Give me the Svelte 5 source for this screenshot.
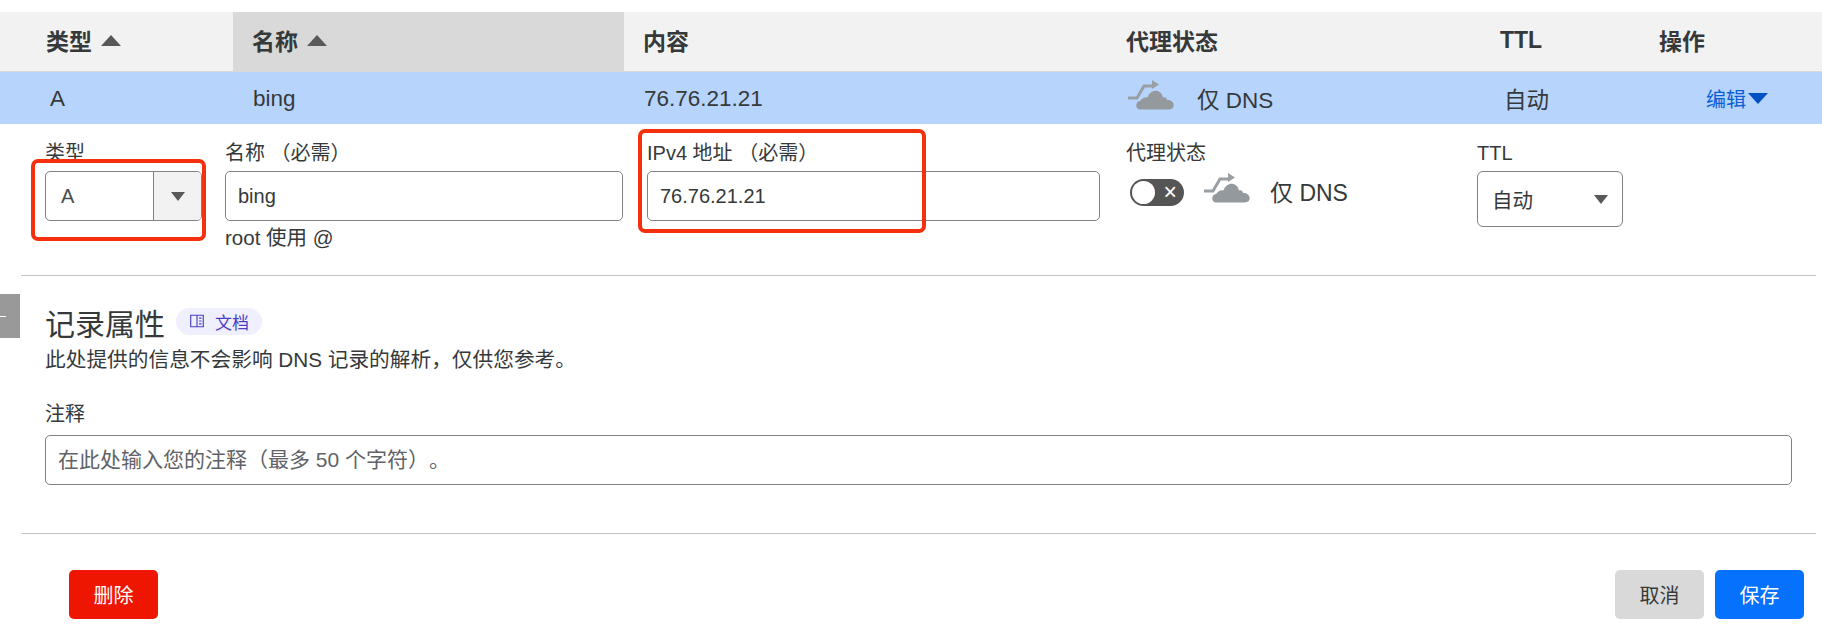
<script>
    const headers = [
        { label: '类型', sort: true },
        { label: '名称', sort: true, active: true },
        { label: '内容' },
        { label: '代理状态' },
        { label: 'TTL' },
        { label: '操作' }
    ];
</script>

{#snippet cloud()}
    <svg class="cloud" viewBox="0 0 46 30" width="46" height="30" aria-hidden="true">
        <path d="M0 18 H9 L16 6 H25" fill="none" stroke="#9a9fa3" stroke-width="3" />
        <path d="M24 0 L31 4.5 L24 9 Z" fill="#9a9fa3" />
        <path d="M12 29.5 C7 29.5 7 21.5 12 21 C14 17.5 18 16.5 19.5 17.5 C22 9 33 8 35 17.5 C37 16.5 39 18 39 20 C47 19.5 48 29.5 41 29.5 Z" fill="#94999d" />
    </svg>
{/snippet}

<div class="page">
    <div class="cols head">
        {#each headers as h}
            <div class="th" class:active={h.active}>
                {h.label}
                {#if h.sort}<span class="sort"></span>{/if}
            </div>
        {/each}
    </div>

    <div class="cols row">
        <div class="td first latin">A</div>
        <div class="td latin">bing</div>
        <div class="td latin">76.76.21.21</div>
        <div class="td proxy">{@render cloud()}<span>仅 DNS</span></div>
        <div class="td ttl">自动</div>
        <div class="td edit">编辑<span class="caret"></span></div>
    </div>

    <div class="form">
        <div class="field type">
            <label for="f-type">类型</label>
            <div class="select-split" id="f-type">
                <span class="val">A</span>
                <span class="btn"><span class="arrow"></span></span>
            </div>
            <div class="mark mark-a"></div>
        </div>
        <div class="field name">
            <label for="f-name">名称 （必需）</label>
            <input id="f-name" value="bing" />
            <div class="help">root 使用 @</div>
        </div>
        <div class="field ip">
            <label for="f-ip">IPv4 地址 （必需）</label>
            <input id="f-ip" value="76.76.21.21" />
            <div class="mark mark-b"></div>
        </div>
        <div class="field status">
            <div class="lbl">代理状态</div>
            <div class="status-row">
                <span class="toggle"><span class="knob"></span><span class="x">×</span></span>
                {@render cloud()}
                <span class="dns">仅 DNS</span>
            </div>
        </div>
        <div class="field ttl-field">
            <div class="lbl">TTL</div>
            <div class="ttl-select"><span>自动</span><span class="arrow"></span></div>
        </div>
    </div>

    <div class="rule first-rule"></div>

    <div class="tab"><span></span></div>

    <section class="attrs">
        <div class="title-line">
            <h2>记录属性</h2>
            <span class="badge">
                <svg viewBox="0 0 14 14" width="16" height="16" aria-hidden="true">
                    <path d="M1.5 2 H12.5 V12 H1.5 Z M7 2 V12 M8.8 4.5 H11 M8.8 7 H11 M8.8 9.5 H11" fill="none" stroke="#4a3fc4" stroke-width="1" />
                </svg>
                文档
            </span>
        </div>
        <p>此处提供的信息不会影响 DNS 记录的解析，仅供您参考。</p>
        <label for="f-note">注释</label>
        <input id="f-note" placeholder="在此处输入您的注释（最多 50 个字符）。" />
    </section>

    <div class="rule"></div>

    <div class="actions">
        <button class="danger">删除</button>
        <div class="right">
            <button class="grey">取消</button>
            <button class="primary">保存</button>
        </div>
    </div>
</div>

<style>
    :global(body) {
        margin: 0;
        background: #fff;
    }

    .page {
        position: relative;
        width: 1822px;
        height: 636px;
        padding-top: 12px;
        box-sizing: border-box;
        overflow: hidden;
        color: #36393a;
        font-family: "Liberation Sans", "Noto Sans CJK SC", sans-serif;
        font-size: 20px;
        text-spacing-trim: space-all;
    }

    .cols {
        display: grid;
        grid-template-columns: 233px 391px 483px 374px 159px 182px;
    }

    .head {
        height: 60px;
        background: #f2f2f2;
        border-bottom: 1px solid #d9d9d9;
        box-sizing: border-box;
    }

    .th {
        display: flex;
        align-items: center;
        gap: 9px;
        padding: 0 0 3px 19px;
        font-size: 23px;
        font-weight: 700;
    }

    .th:first-child {
        padding-left: 46px;
    }

    .th.active {
        background: #d9d9d9;
    }

    .sort {
        width: 0;
        height: 0;
        border-left: 10px solid transparent;
        border-right: 10px solid transparent;
        border-bottom: 11px solid #595959;
    }

    .row {
        height: 52px;
        background: #b7d4fd;
    }

    .td {
        display: flex;
        align-items: center;
        padding-left: 20px;
        font-size: 22.5px;
    }

    .td.latin {
        padding-top: 2px;
    }

    .td.first {
        padding-left: 50px;
    }

    .proxy {
        gap: 23px;
        padding-left: 21px;
    }

    .proxy .cloud {
        margin-top: -7px;
    }

    .ttl {
        padding-left: 23px;
    }

    .td.edit {
        padding-left: 66px;
        color: #0a5fd6;
        font-size: 20px;
    }

    .caret {
        margin-left: 2px;
        border-left: 10px solid transparent;
        border-right: 10px solid transparent;
        border-top: 11px solid #0051c3;
    }

    .form {
        display: flex;
        height: 151px;
        padding: 16px 0 0 45px;
        box-sizing: border-box;
    }

    .field {
        position: relative;
        display: flex;
        flex-direction: column;
    }

    .field label,
    .lbl,
    .attrs label {
        font-size: 20px;
        line-height: 26px;
        margin-bottom: 5px;
    }

    .type { width: 180px; }
    .name { width: 422px; }
    .ip { width: 479px; }
    .status { width: 351px; }

    input {
        box-sizing: border-box;
        height: 50px;
        padding: 0 12px;
        border: 1px solid #808285;
        border-radius: 5px;
        background: #fff;
        color: #36393a;
        font: inherit;
        font-size: 20px;
        outline: none;
    }

    input::placeholder {
        color: #5f6368;
        opacity: 1;
    }

    .name input { width: 398px; }
    .ip input { width: 453px; }

    .help {
        margin-top: 0;
        font-size: 20.5px;
    }

    .select-split {
        display: flex;
        width: 157px;
        height: 50px;
        box-sizing: border-box;
        border: 1px solid #808285;
        border-radius: 5px;
        overflow: hidden;
    }

    .val {
        flex: 1;
        padding-left: 15px;
        line-height: 48px;
        color: #4a4d4f;
    }

    .btn {
        display: flex;
        width: 47px;
        align-items: center;
        justify-content: center;
        background: #f2f2f2;
        border-left: 1px solid #808285;
    }

    .arrow {
        width: 0;
        height: 0;
        border-left: 7px solid transparent;
        border-right: 7px solid transparent;
        border-top: 9px solid #595959;
    }

    .mark {
        position: absolute;
        box-sizing: border-box;
        border: 4px solid #f5300f;
        border-radius: 7px;
    }

    .mark-a {
        left: -14px;
        top: 19px;
        width: 175px;
        height: 82px;
    }

    .mark-b {
        left: -9px;
        top: -11px;
        width: 288px;
        height: 104px;
    }

    .status-row {
        display: flex;
        align-items: center;
        gap: 20px;
    }

    .status-row .cloud {
        margin: -4px 0 0 0;
    }

    .toggle {
        display: flex;
        align-items: center;
        justify-content: space-between;
        width: 54px;
        height: 27px;
        margin: 6px 0 0 4px;
        padding: 0 7px 0 2px;
        box-sizing: border-box;
        border-radius: 14px;
        background: #555;
    }

    .knob {
        width: 23px;
        height: 23px;
        border-radius: 50%;
        background: #fff;
    }

    .x {
        color: #fff;
        font-size: 23px;
        line-height: 1;
    }

    .dns {
        margin-top: 3px;
        font-size: 23px;
    }

    .ttl-select {
        display: flex;
        align-items: center;
        justify-content: space-between;
        width: 146px;
        height: 56px;
        padding: 0 14px 0 14px;
        box-sizing: border-box;
        border: 1px solid #808285;
        border-radius: 6px;
        font-size: 20.5px;
    }

    .rule {
        height: 1px;
        margin: 0 6px 0 21px;
        background: #c4c4c4;
    }

    .tab {
        position: absolute;
        left: 0;
        top: 294px;
        width: 20px;
        height: 44px;
        background: #999;
    }

    .tab span {
        position: absolute;
        left: 0;
        top: 22px;
        width: 6px;
        height: 1px;
        background: #fff;
    }

    .attrs {
        display: flex;
        flex-direction: column;
        height: 257px;
        padding: 31px 30px 0 45px;
        box-sizing: border-box;
    }

    .title-line {
        display: flex;
        align-items: center;
        gap: 11px;
    }

    h2 {
        margin: 0;
        font-size: 30px;
        font-weight: 400;
        line-height: 36px;
    }

    .badge {
        display: flex;
        align-items: center;
        gap: 10px;
        height: 27px;
        padding: 0 13px;
        margin-top: -8px;
        border-radius: 14px;
        background: #f0effd;
        color: #4a3fc4;
        font-size: 17px;
    }

    p {
        margin: 4px 0 28px;
        font-size: 20.7px;
        line-height: 26px;
    }

    .attrs label {
        margin-bottom: 8px;
    }

    .attrs input {
        width: 1747px;
        height: 50px;
        font-size: 21px;
    }

    .actions {
        display: flex;
        justify-content: space-between;
        padding: 36px 18px 0 69px;
    }

    .right {
        display: flex;
        gap: 11px;
    }

    button {
        width: 89px;
        height: 49px;
        border: 0;
        border-radius: 5px;
        font: inherit;
        font-size: 20px;
    }

    .danger {
        background: #ee1600;
        color: #fff;
    }

    .grey {
        background: #d9d9d9;
        color: #36393a;
    }

    .primary {
        background: #0571fd;
        color: #fff;
    }
</style>
